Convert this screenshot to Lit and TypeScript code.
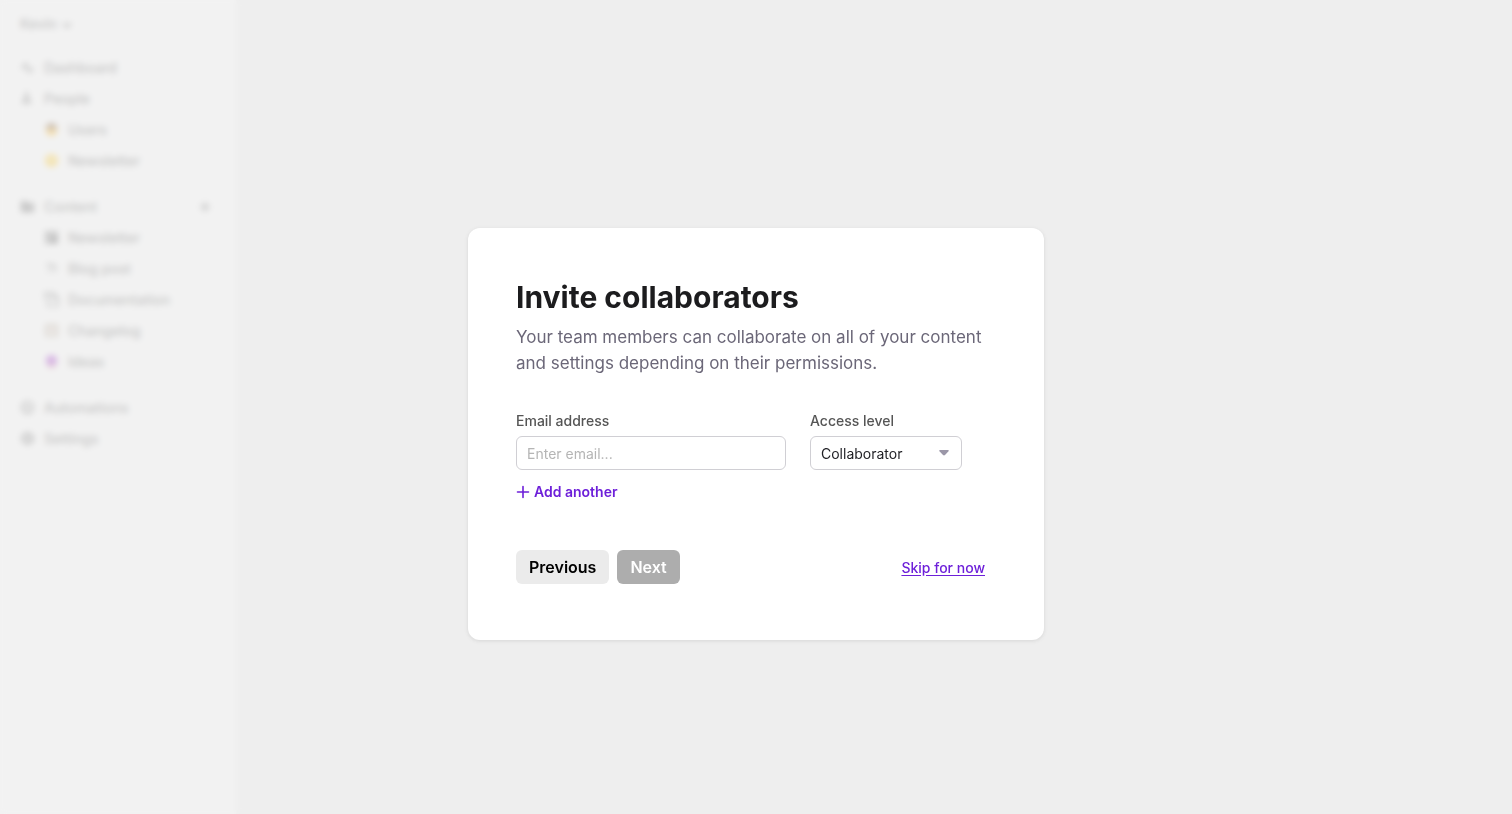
import { LitElement, html, css, svg, TemplateResult } from "lit";
import { customElement } from "lit/decorators.js";
import { classMap } from "lit/directives/class-map.js";

interface NavItem {
  label: string;
  icon: TemplateResult;
  nested?: boolean;
  add?: boolean;
}

const activity = svg`<path d="M1 8h3l2-4 4 9 2-3h3" fill="none" stroke="currentColor" stroke-width="2"/>`;
const person = svg`<circle cx="7" cy="3" r="2" fill="currentColor"/><path d="M7 5v4M7 6l-4 6h8z" fill="none" stroke="currentColor" stroke-width="2"/>`;
const cowboy = svg`<circle cx="8" cy="9" r="6" fill="#ffb81f"/><path d="M0 3q2 2 4 1l1-3h6l1 3q2 1 4-1-2 5-8 5T0 3z" fill="#7d5228"/>`;
const smiley = svg`<circle cx="8" cy="8" r="7" fill="#ffc91f"/><path d="M4 6q4 5 8 0z" fill="#fff3c0"/>`;
const folder = svg`<path d="M1 2h5l2 2h7v10H1z" fill="currentColor"/><path d="M7 6v4M11 6v4" stroke="#fff"/>`;
const newspaper = svg`<rect x="1" y="1" width="14" height="14" fill="#777"/><path d="M3 4h10M3 9h4M3 12h4" stroke="#ddd" stroke-width="1"/><path d="M9 8h4v5H9z" fill="#333"/>`;
const pen = svg`<path d="M2 4l5-1 6 9M9 4l5 2M4 12l3-4" fill="none" stroke="#888" stroke-width="2"/>`;
const page = svg`<path d="M1 1h9l5 5v9H4V5H1z" fill="#fff" stroke="#888" stroke-width="2"/><path d="M9 1v6h6" fill="none" stroke="#777" stroke-width="2"/>`;
const clipboard = svg`<rect x="1" y="1" width="14" height="14" rx="1" fill="#b8ab98"/><path d="M4 4h8v9H4z" fill="#e9ddd8"/>`;
const crystal = svg`<circle cx="8" cy="7" r="6" fill="#a133c9"/><path d="M4 12h8l1 3H3z" fill="#e09aaa"/>`;
const bolt = svg`<circle cx="8" cy="8" r="6" fill="none" stroke="currentColor" stroke-width="2"/><path d="M9 3L5 9h6l-4 4" fill="none" stroke="currentColor" stroke-width="1"/>`;
const gear = svg`<circle cx="8" cy="8" r="5" fill="none" stroke="currentColor" stroke-width="4" stroke-dasharray="3 1"/><circle cx="8" cy="8" r="3" fill="none" stroke="currentColor"/>`;

const groups: NavItem[][] = [
  [
    { label: "Dashboard", icon: activity },
    { label: "People", icon: person },
    { label: "Users", icon: cowboy, nested: true },
    { label: "Newsletter", icon: smiley, nested: true },
  ],
  [
    { label: "Content", icon: folder, add: true },
    { label: "Newsletter", icon: newspaper, nested: true },
    { label: "Blog post", icon: pen, nested: true },
    { label: "Documentation", icon: page, nested: true },
    { label: "Changelog", icon: clipboard, nested: true },
    { label: "Ideas", icon: crystal, nested: true },
  ],
  [
    { label: "Automations", icon: bolt },
    { label: "Settings", icon: gear },
  ],
];

@customElement("app-sidebar")
class AppSidebar extends LitElement {
  static styles = css`
    :host {
      display: block;
      box-sizing: border-box;
      width: 236px;
      padding: 12px 20px;
      background: #fcfcfc;
      color: #666;
      font-size: 14px;
      font-weight: 500;
      line-height: 24px;
    }
    .account {
      display: flex;
      align-items: center;
      gap: 4px;
      padding: 0;
      border: 0;
      background: none;
      color: inherit;
      font: inherit;
    }
    .nav {
      display: flex;
      flex-direction: column;
      gap: 15px;
      margin-top: 16px;
    }
    .group {
      list-style: none;
      margin: 0;
      padding: 0;
    }
    .row {
      display: flex;
      align-items: center;
      height: 31px;
      padding-right: 6px;
    }
    .nested {
      padding-left: 24px;
    }
    .link {
      display: flex;
      flex: 1;
      align-items: center;
      gap: 9px;
      color: inherit;
      text-decoration: none;
    }
    .add {
      display: flex;
      padding: 0;
      border: 0;
      background: none;
      color: inherit;
    }
  `;

  render() {
    return html`
      <button class="account">
        Kevin
        <svg width="12" height="12" viewBox="0 0 12 12" aria-hidden="true">
          <path d="M2 5l4 4 4-4" fill="none" stroke="currentColor" stroke-width="2" />
        </svg>
      </button>
      <nav class="nav">
        ${groups.map(
          (group) => html`<ul class="group">
            ${group.map(
              (item) => html`<li class=${classMap({ row: true, nested: !!item.nested })}>
                <a class="link" href="#">
                  <svg width="15" height="15" viewBox="0 0 16 16" aria-hidden="true">${item.icon}</svg>
                  ${item.label}
                </a>
                ${item.add
                  ? html`<button class="add" aria-label="Add content">
                      <svg width="10" height="10" viewBox="0 0 10 10">
                        <path d="M5 0v10M0 5h10" stroke="currentColor" stroke-width="2" />
                      </svg>
                    </button>`
                  : null}
              </li>`
            )}
          </ul>`
        )}
      </nav>
    `;
  }
}

@customElement("invite-dialog")
class InviteDialog extends LitElement {
  static styles = css`
    :host {
      display: block;
      box-sizing: border-box;
      width: 100%;
      max-width: 576px;
      padding: 48px 48px 56px;
      border-radius: 12px;
      background: #fff;
      box-shadow: 0 1px 4px rgba(0, 0, 0, 0.1);
    }
    .title {
      margin: 0;
      color: #1c1c1e;
      font-size: 30px;
      font-weight: 700;
      line-height: 42px;
    }
    .intro {
      margin: 6px 0 34px;
      color: #6b6778;
      font-size: 17px;
      line-height: 26px;
    }
    .fields {
      display: grid;
      grid-template-columns: 270px 152px;
      gap: 24px;
    }
    .field {
      display: flex;
      flex-direction: column;
      gap: 4px;
      min-width: 0;
    }
    .label {
      color: #555;
      font-size: 14px;
      font-weight: 500;
      line-height: 22px;
    }
    .control {
      box-sizing: border-box;
      width: 100%;
      height: 34px;
      margin: 0;
      padding: 0 10px;
      border: 1px solid #d0cfd4;
      border-radius: 6px;
      background: #fff;
      color: #1f1f24;
      font: inherit;
      font-size: 14px;
      outline: none;
      appearance: none;
    }
    .control::placeholder {
      color: #b5b5b5;
      opacity: 1;
    }
    .select {
      display: grid;
      align-items: center;
    }
    .select > * {
      grid-area: 1 / 1;
    }
    .caret {
      justify-self: end;
      margin-right: 13px;
      pointer-events: none;
    }
    .another {
      display: flex;
      align-items: center;
      gap: 4px;
      margin: 10px 0 46px;
      padding: 0;
      border: 0;
      background: none;
      color: #6d1fd9;
      font: inherit;
      font-size: 14px;
      font-weight: 600;
      line-height: 24px;
    }
    .actions {
      display: flex;
      align-items: center;
      gap: 8px;
      padding-right: 11px;
    }
    .button {
      height: 34px;
      padding: 0 13px;
      border: 0;
      border-radius: 6px;
      background: #ebebeb;
      color: #000;
      font: inherit;
      font-size: 16px;
      font-weight: 600;
    }
    .next {
      background: #adadad;
      color: #fff;
    }
    .skip {
      margin-left: auto;
      color: #6d1fd9;
      font-size: 14px;
      font-weight: 500;
      text-underline-offset: 2px;
    }
  `;

  render() {
    return html`
      <h1 class="title">Invite collaborators</h1>
      <p class="intro">
        Your team members can collaborate on all of your content and settings depending on their permissions.
      </p>
      <div class="fields">
        <div class="field">
          <label class="label" for="email">Email address</label>
          <input class="control" id="email" type="email" placeholder="Enter email..." />
        </div>
        <div class="field">
          <label class="label" for="level">Access level</label>
          <div class="select">
            <select class="control" id="level">
              <option>Collaborator</option>
            </select>
            <svg class="caret" width="10" height="6" viewBox="0 0 10 6" aria-hidden="true">
              <path d="M1 0h8q1.500 0 .5 1.200L6 5q-1 .9-2 0L.5 1.200Q-.5 0 1 0z" fill="#9b97a8" />
            </svg>
          </div>
        </div>
      </div>
      <button class="another">
        <svg width="14" height="14" viewBox="0 0 14 14" aria-hidden="true">
          <path d="M7 1.500v11M1.500 7h11" stroke="currentColor" stroke-width="1.600" stroke-linecap="round" />
        </svg>
        Add another
      </button>
      <div class="actions">
        <button class="button">Previous</button>
        <button class="button next" disabled>Next</button>
        <a class="skip" href="#">Skip for now</a>
      </div>
    `;
  }
}

@customElement("app-root")
class AppRoot extends LitElement {
  static styles = css`
    :host {
      display: grid;
      min-height: 100vh;
      background: #eee;
      font-family: Inter, "Liberation Sans", sans-serif;
    }
    .sidebar,
    .overlay {
      grid-area: 1 / 1;
    }
    .overlay {
      z-index: 1;
      display: grid;
      place-items: center;
      padding: 54px 24px 0;
      background: rgba(238, 238, 238, 0.7);
      backdrop-filter: blur(3px);
    }
  `;

  render() {
    return html`
      <app-sidebar class="sidebar" inert></app-sidebar>
      <div class="overlay" role="dialog" aria-modal="true" aria-label="Invite collaborators">
        <invite-dialog></invite-dialog>
      </div>
    `;
  }
}
